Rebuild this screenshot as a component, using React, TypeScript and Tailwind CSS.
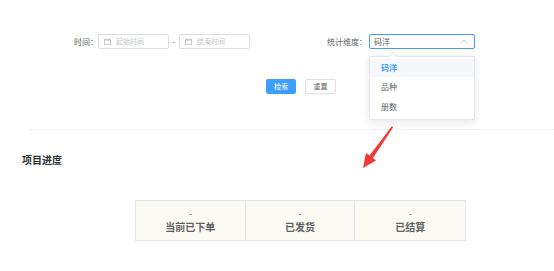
import React from "react";

const font = { fontFamily: '"Noto Sans CJK SC", "Noto Sans", sans-serif' };

function Cal() {
  return (
    <svg width="7" height="7" viewBox="0 0 8 8" className="shrink-0">
      <rect x="0.5" y="1.5" width="7" height="6" fill="none" stroke="#c0c4cc" strokeWidth="1" />
      <rect x="0.5" y="1.5" width="7" height="1.5" fill="#c0c4cc" />
    </svg>
  );
}

export default function App() {
  return (
    <div className="relative w-[554px] h-[271px] bg-white overflow-hidden" style={font}>
      {/* filter row */}
      <div className="flex items-center pt-[34px] h-[49px]">
        <div className="ml-[74px] flex items-center">
          <span className="text-[8px] text-[#606266] w-[24px]">时间：</span>
          <div className="w-[71px] h-[15px] border border-[#dcdfe6] rounded-[2px] flex items-center pl-[5px] gap-[5px]">
            <Cal />
            <span className="text-[7px] text-[#c0c4cc] leading-none">起始时间</span>
          </div>
          <span className="w-[10px] text-center text-[8px] text-[#606266]">-</span>
          <div className="w-[71px] h-[15px] border border-[#dcdfe6] rounded-[2px] flex items-center pl-[5px] gap-[5px]">
            <Cal />
            <span className="text-[7px] text-[#c0c4cc] leading-none">结束时间</span>
          </div>
        </div>
        <div className="ml-[70px] flex items-center">
          <span className="text-[8px] text-[#606266] w-[49px] text-right pr-[2px]">统计维度：</span>
          <div className="relative w-[106px] h-[15px] border border-[#409eff] rounded-[2px] flex items-center pl-[4px] pr-[6px] justify-between">
            <span className="text-[8px] text-[#606266] leading-none">码洋</span>
            <svg width="8" height="5" viewBox="0 0 8 5">
              <path d="M1 4.2 L4 1 L7 4.2" fill="none" stroke="#c0c4cc" strokeWidth="1" />
            </svg>
            {/* dropdown */}
            <div className="absolute left-[-1px] top-[21px] w-[106px] h-[64px] bg-white border border-[#e4e7ed] rounded-[2px] shadow-[0_2px_8px_rgba(0,0,0,0.1)] z-10 py-[2px]">
              <div className="absolute -top-[4px] left-[20px] w-[6px] h-[6px] bg-white border-l border-t border-[#e4e7ed] rotate-45" />
              <div className="h-[18px] bg-[#f5f7fa] flex items-center pl-[11px] text-[8px] text-[#409eff] font-semibold">码洋</div>
              <div className="h-[20px] flex items-center pl-[11px] text-[8px] text-[#606266]">品种</div>
              <div className="h-[19px] flex items-center pl-[11px] text-[8px] text-[#606266]">册数</div>
            </div>
          </div>
        </div>
      </div>

      {/* buttons */}
      <div className="flex items-center mt-[30px] ml-[266px] gap-[9px]">
        <button className="w-[30px] h-[15px] bg-[#409eff] text-white text-[7px] rounded-[2px] flex items-center justify-center leading-none">检索</button>
        <button className="w-[31px] h-[15px] bg-white border border-[#dcdfe6] text-[#606266] text-[7px] rounded-[2px] flex items-center justify-center leading-none">重置</button>
      </div>

      {/* divider */}
      <div className="mt-[35px] ml-[30px] border-t border-dotted border-[#e6e6f0]" />

      {/* title */}
      <div className="mt-[25px] ml-[22px] text-[10px] font-bold text-[#303133] leading-none">项目进度</div>

      {/* stats table */}
      <div className="mt-[35px] ml-[135px] w-[331px] h-[41px] grid grid-cols-3 border border-[#dfe4ed] bg-[#fbfaf3]">
        {["当前已下单", "已发货", "已结算"].map((t, i) => (
          <div key={t} className={`flex flex-col items-center justify-center ${i < 2 ? "border-r border-[#dfe4ed]" : ""}`}>
            <span className="text-[8px] font-bold text-[#5b8ad6] leading-none h-[9px]">-</span>
            <span className="text-[10px] font-semibold text-[#606266] leading-none mt-[3px]">{t}</span>
          </div>
        ))}
      </div>

      {/* red arrow annotation */}
      <svg className="absolute left-0 top-0 pointer-events-none" width="554" height="271">
        <polygon points="392,126 393,127.5 373,158 376,160.5 363,168 366,153 369.5,155.5" fill="#f03a35" />
      </svg>
    </div>
  );
}
